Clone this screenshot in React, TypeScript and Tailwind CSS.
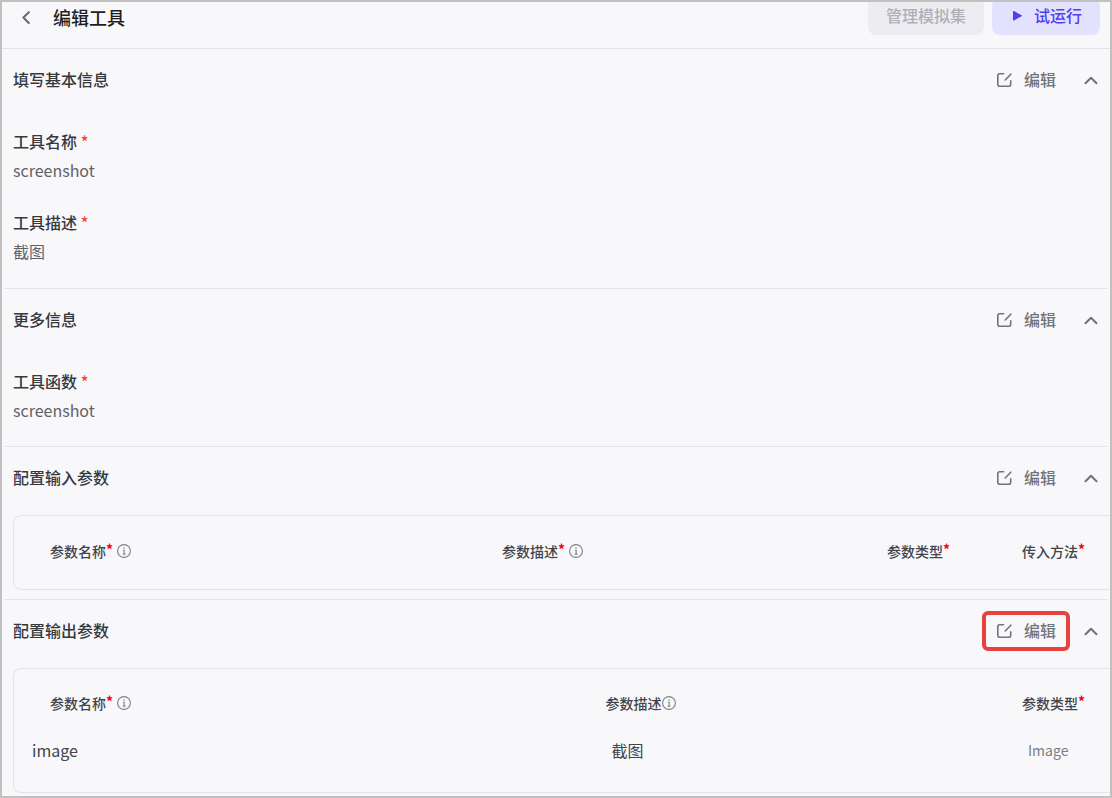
import { useState, type ReactNode } from 'react';

function EditIcon() {
  return (
    <svg viewBox="0 0 16 16" className="size-4 shrink-0" fill="none" stroke="currentColor" strokeWidth="1.6" strokeLinecap="round" strokeLinejoin="round" aria-hidden="true">
      <path d="M7.600 2.800H3.700a1.900 1.900 0 0 0-1.900 1.900v8.900a1.900 1.900 0 0 0 1.900 1.700h9.100a1.900 1.900 0 0 0 1.900-1.900V9.800" />
      <path d="M9.200 9 14.800 3.200" />
    </svg>
  );
}

function ChevronUp({ open }: { open: boolean }) {
  return (
    <svg viewBox="0 0 14 14" className={open ? 'size-3.5' : 'size-3.5 rotate-180'} fill="none" stroke="currentColor" strokeWidth="2.1" strokeLinecap="round" strokeLinejoin="round" aria-hidden="true">
      <path d="M1.500 11.200 7 5.800l5.500 5.400" />
    </svg>
  );
}

function InfoIcon() {
  return (
    <svg viewBox="0 0 14 14" className="size-3.5 shrink-0 text-[#808287]" fill="none" stroke="currentColor" strokeWidth="1.1" aria-hidden="true">
      <circle cx="7" cy="7" r="6.400" />
      <path d="M5.900 6.200h1.300v3.800M5.700 10.100h2.800" />
      <circle cx="7" cy="4" r="0.800" fill="currentColor" stroke="none" />
    </svg>
  );
}

type SectionProps = { title: string; highlighted?: boolean; children: ReactNode };

function Section({ title, highlighted = false, children }: SectionProps) {
  const [open, setOpen] = useState(true);
  return (
    <section className="pl-[11px]">
      <div className="flex h-[60px] items-center justify-between pr-3">
        <h2 className="font-medium text-[#36383e]">{title}</h2>
        <div className="flex items-center gap-4 text-[#72747c]">
          <button type="button" className="relative flex h-8 items-center gap-3 px-3 font-medium">
            <EditIcon />
            编辑
            {highlighted && <span className="pointer-events-none absolute -inset-x-0.5 -top-[3px] -bottom-[5px] rounded-md border-4 border-[#e54240]" />}
          </button>
          <button type="button" aria-label={title} aria-expanded={open} onClick={() => setOpen(!open)}>
            <ChevronUp open={open} />
          </button>
        </div>
      </div>
      {open && children}
    </section>
  );
}

function Divider() {
  return <hr className="mx-0.5 border-[#e3e4e8]" />;
}

function Field({ label, value }: { label: string; value: string }) {
  return (
    <div className="flex flex-col gap-[5px]">
      <dt className="font-medium text-[#36383e]">
        {label} <span className="text-[#f5482c]">*</span>
      </dt>
      <dd className="text-[#606269]">{value}</dd>
    </div>
  );
}

type HeadProps = { children: string; required?: boolean; info?: boolean; className: string };

function Head({ children, required = false, info = false, className }: HeadProps) {
  return (
    <th scope="col" className={`pb-1 text-left text-sm font-medium text-[#42444a] ${className}`}>
      <span className="flex items-center">
        {children}
        {required && <span className="h-6 font-bold leading-5 text-[#f5000c]">*</span>}
        {info && <span className={required ? 'ml-1' : ''}><InfoIcon /></span>}
      </span>
    </th>
  );
}

export default function App() {
  return (
    <div className="min-h-screen border-2 border-[#c1c1c2] bg-[#f8f8fb] font-['Noto_Sans_CJK_SC',sans-serif] text-base leading-6">
      <header className="flex h-[46px] items-start justify-between overflow-hidden pr-2.5 pl-[17px]">
        <div className="flex items-center gap-5 pt-px">
          <button type="button" aria-label="返回" className="text-[#6b6d73]">
            <svg viewBox="0 0 14 14" className="size-3.5" fill="none" stroke="currentColor" strokeWidth="2.1" strokeLinecap="round" strokeLinejoin="round" aria-hidden="true">
              <path d="M9.800 2.200 4.400 7.600l5.400 5.400" />
            </svg>
          </button>
          <h1 className="text-lg font-medium text-[#1d1f24]">编辑工具</h1>
        </div>
        <div className="-mt-1 flex gap-2">
          <button type="button" disabled className="h-[37px] rounded-lg bg-[#ededf1] px-[18px] pb-[3px] font-medium text-[#adb0ba]">管理模拟集</button>
          <button type="button" className="flex h-[37px] items-center gap-3 rounded-lg bg-[#e2e2ff] px-[18px] pb-[3px] font-medium text-[#503ef0]">
            <svg viewBox="0 0 12 12" className="size-3" fill="currentColor" aria-hidden="true">
              <path d="M3 2.600v8.400a.6.6 0 0 0 .9.5l7.700-4.200a.6.6 0 0 0 0-1L3.900 2.100a.6.6 0 0 0-.9.5Z" />
            </svg>
            试运行
          </button>
        </div>
      </header>
      <hr className="border-[#e3e4e8]" />
      <main>
        <Section title="填写基本信息">
          <dl className="flex flex-col gap-7 pt-5 pb-[25px]">
            <Field label="工具名称" value="screenshot" />
            <Field label="工具描述" value="截图" />
          </dl>
        </Section>
        <Divider />
        <Section title="更多信息">
          <dl className="pt-5 pb-6">
            <Field label="工具函数" value="screenshot" />
          </dl>
        </Section>
        <Divider />
        <Section title="配置输入参数">
          <div className="mt-2 mb-[9px] rounded-l-lg border border-r-0 border-[#e3e4e8]">
            <table className="w-full table-fixed">
              <thead>
                <tr className="h-[73px]">
                  <Head required info className="pl-9">参数名称</Head>
                  <Head required info className="w-[385px]">参数描述</Head>
                  <Head required className="w-[135px]">参数类型</Head>
                  <Head required className="w-[88px]">传入方法</Head>
                </tr>
              </thead>
            </table>
          </div>
        </Section>
        <Divider />
        <Section title="配置输出参数" highlighted>
          <div className="mt-2 mb-0.5 rounded-l-lg border border-r-0 border-[#e3e4e8] pb-4">
            <table className="w-full table-fixed">
              <thead>
                <tr className="h-[71px]">
                  <Head required info className="pl-9">参数名称</Head>
                  <Head info className="w-[38%]">参数描述</Head>
                  <Head required className="w-[88px]">参数类型</Head>
                </tr>
              </thead>
              <tbody>
                <tr className="h-9 align-top leading-5 text-[#42444a]">
                  <td className="pl-[18px]">image</td>
                  <td className="pl-1.5">截图</td>
                  <td className="pl-1.5 text-sm text-[#7b7d84]">Image</td>
                </tr>
              </tbody>
            </table>
          </div>
        </Section>
      </main>
    </div>
  );
}
